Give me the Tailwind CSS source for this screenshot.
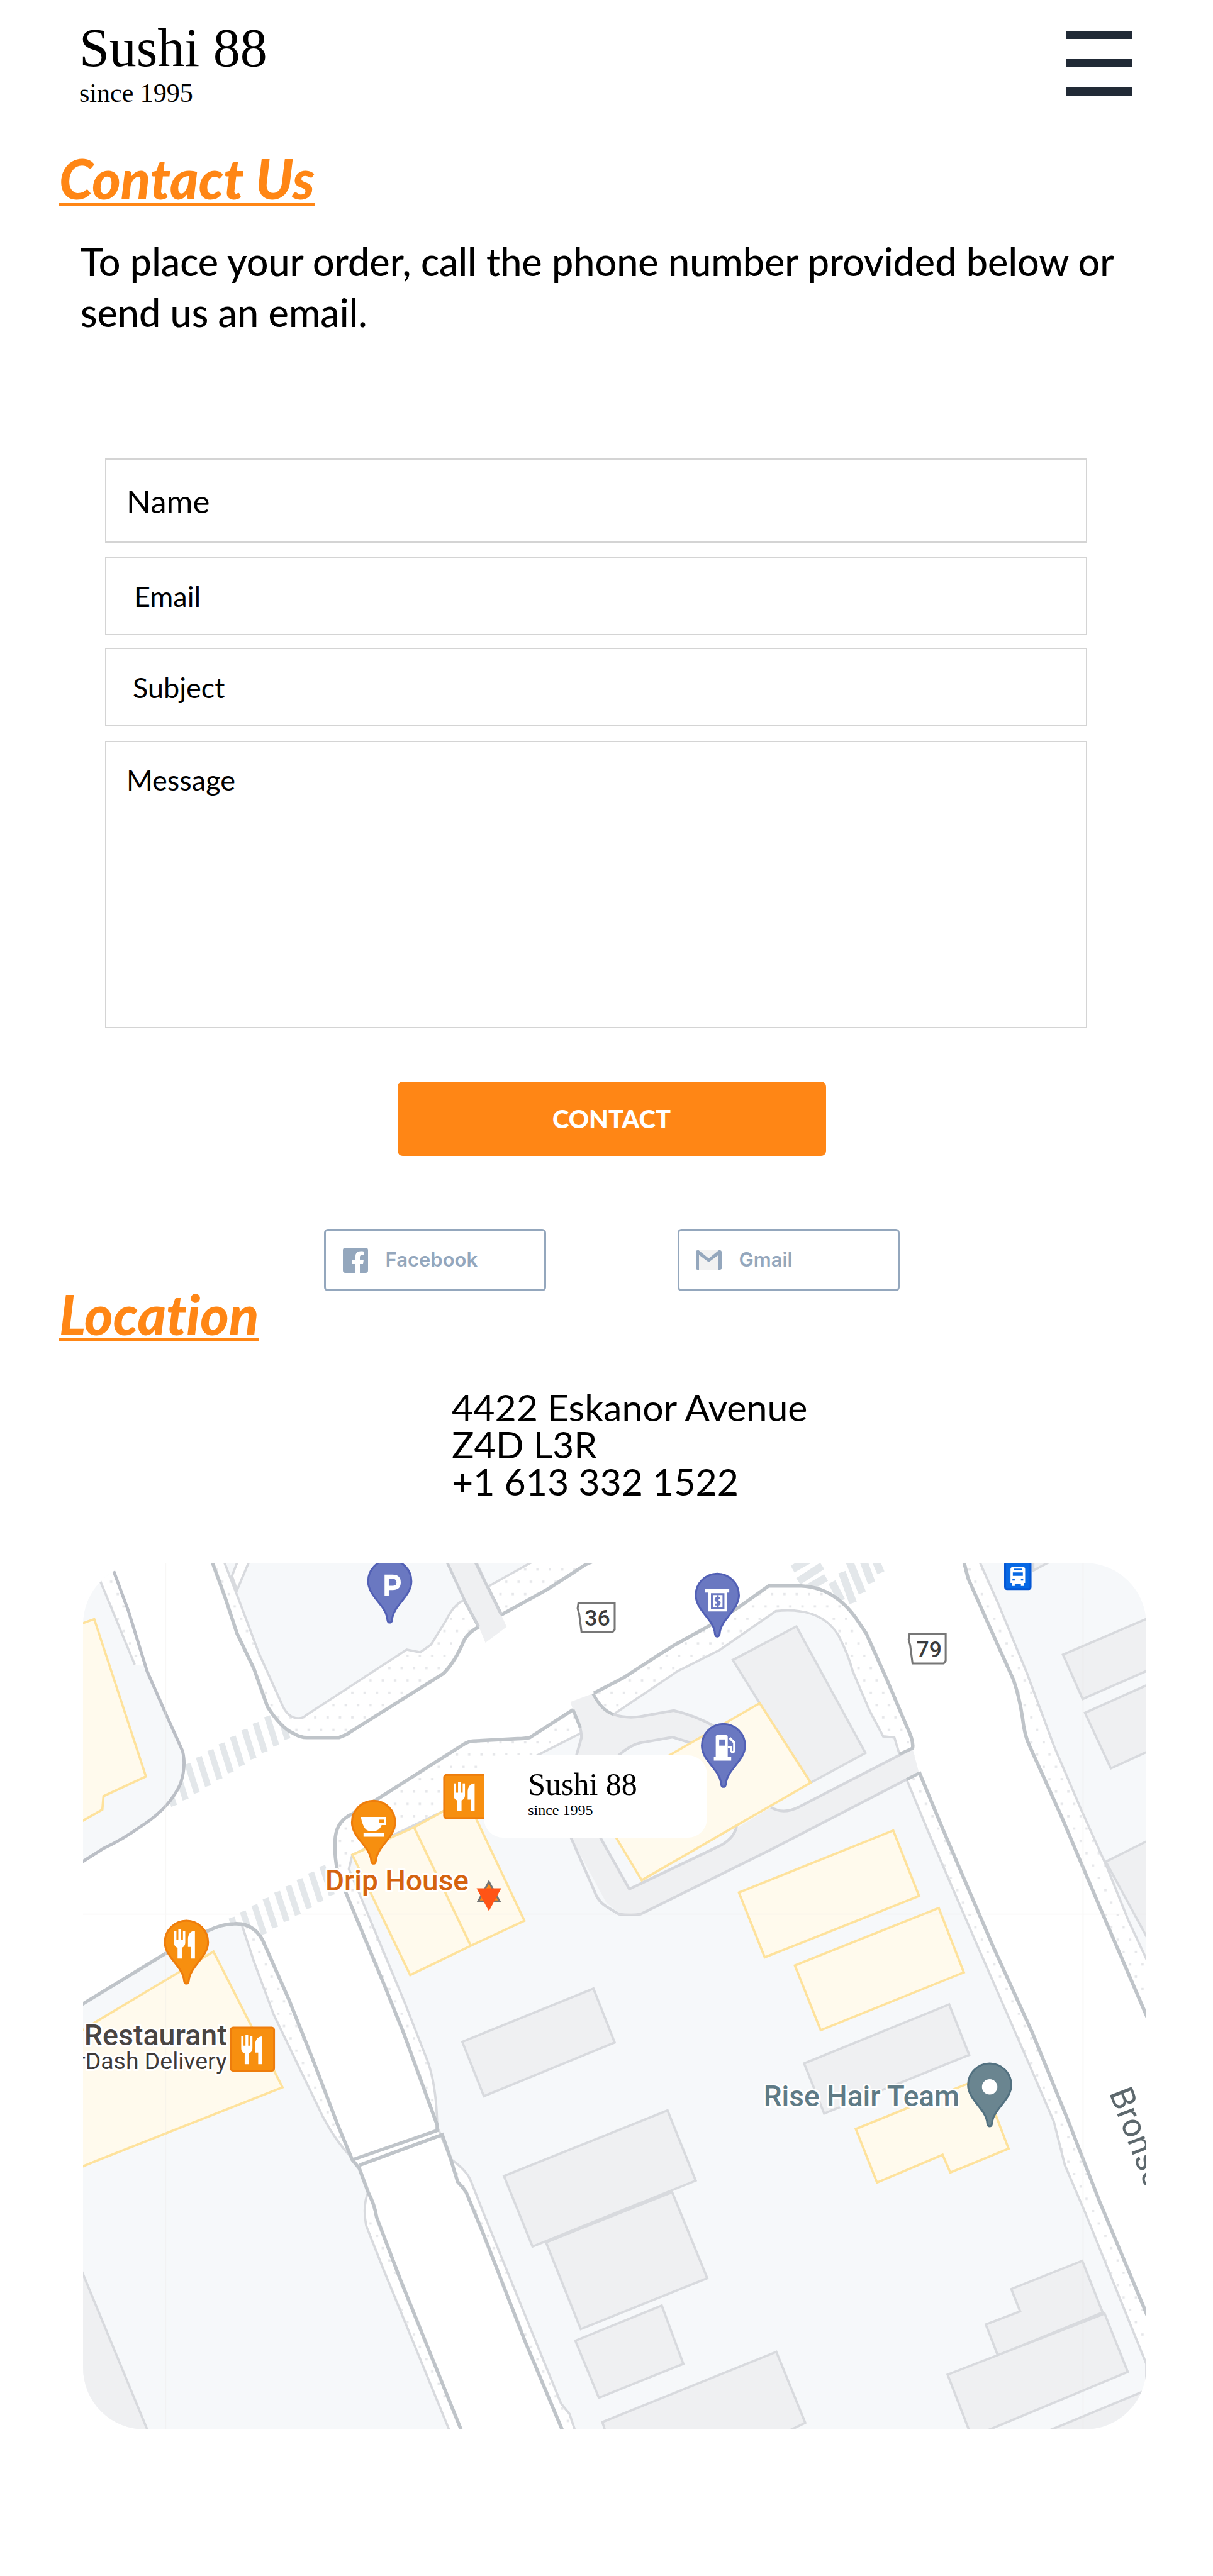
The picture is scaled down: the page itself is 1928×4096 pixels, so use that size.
<!DOCTYPE html>
<html lang="en">
<head>
<meta charset="utf-8">
<meta name="viewport" content="width=device-width, initial-scale=1">
<title>Sushi 88 – Contact Us</title>
<script src="https://cdn.jsdelivr.net/npm/@tailwindcss/browser@4"></script>
</head>
<body class="bg-white text-black font-['Lato','Open_Sans',sans-serif] [font-variant-ligatures:none]">

<header class="flex items-start justify-between pt-[34px] pl-[126px] pr-[129px]">
  <a href="#" class="block font-['Liberation_Serif',serif]">
    <span class="block text-[86px] leading-[84px]">Sushi 88</span>
    <span class="mt-1.5 block text-[42px] leading-12">since 1995</span>
  </a>
  <button type="button" aria-label="Menu" class="mt-[15px] flex w-26 flex-col gap-8">
    <span class="h-[13px] bg-[#212a36]"></span>
    <span class="h-[13px] bg-[#212a36]"></span>
    <span class="h-[13px] bg-[#212a36]"></span>
  </button>
</header>

<main class="pb-[234px]">
  <section>
    <h1 class="mt-[76px] pl-[94px] text-[87px] leading-[72px] font-black italic text-[#ff8615] underline decoration-[5px] underline-offset-[5px]">Contact Us</h1>
    <p class="mt-[55px] pl-32 pr-24 text-[61px] leading-[81px] font-medium">To place your order, call the phone number provided below or send us an email.</p>

    <form class="mt-[192px]">
      <div class="flex flex-col pl-[167px] pr-[200px]">
        <input type="text" name="name" aria-label="Name" placeholder="Name" class="h-[134px] border-2 border-[#d4d4d4] pl-8 text-[51px] placeholder:text-black placeholder:opacity-100">
        <input type="email" name="email" aria-label="Email" placeholder="Email" class="mt-[22px] h-[125px] border-2 border-[#d4d4d4] pl-11 text-[45px] placeholder:text-black placeholder:opacity-100">
        <input type="text" name="subject" aria-label="Subject" placeholder="Subject" class="mt-5 h-[125px] border-2 border-[#d4d4d4] pl-10.5 text-[45px] placeholder:text-black placeholder:opacity-100">
        <textarea name="message" aria-label="Message" placeholder="Message" class="mt-[23px] h-[457px] resize-none border-2 border-[#d4d4d4] pt-[34px] pl-8 text-[45px] leading-[52px] placeholder:text-black placeholder:opacity-100"></textarea>
      </div>
      <div class="mt-[85px] flex justify-center pl-4">
        <button type="submit" class="h-[118px] w-[681px] rounded-lg bg-[#ff8615] text-[40px] font-black text-white">CONTACT</button>
      </div>
    </form>

    <div class="mt-[116px] flex justify-center gap-[209px] pl-4 font-['Inter',sans-serif] text-[31px] font-semibold text-[#94a7bd]">
      <a href="#" class="flex h-[99px] w-[353px] items-center gap-[28px] rounded-md border-3 border-[#94a7bd] pl-[27px]">
        <svg class="size-10" viewBox="0 0 40 40" aria-hidden="true"><path fill="#94a7bd" d="M4 0H36a4 4 0 0 1 4 4V36a4 4 0 0 1-4 4H27V26h5l1-7h-6v-4c0-2 1-3.500 3.500-3.500H33V6c-1-.3-2.500-.5-4.500-.5-5.500 0-8.500 3-8.500 8.500v5h-5v7h5v14H4a4 4 0 0 1-4-4V4a4 4 0 0 1 4-4z"/></svg>
        <span>Facebook</span>
      </a>
      <a href="#" class="flex h-[99px] w-[353px] items-center gap-[28px] rounded-md border-3 border-[#94a7bd] pl-[26px]">
        <svg class="h-[31px] w-[41px]" viewBox="0 0 41 31" aria-hidden="true"><path fill="#f2f2f2" d="M2 0H39V31H2z"/><path fill="#94a7bd" d="M0 3a3 3 0 0 1 3-3h1.500L20.500 13 36.500 0H38a3 3 0 0 1 3 3V28a3 3 0 0 1-3 3h-2V7.500L20.500 19 5 7.500V31H3a3 3 0 0 1-3-3z"/></svg>
        <span>Gmail</span>
      </a>
    </div>
  </section>

  <section>
    <h2 class="pl-[94px] text-[87px] leading-[74px] font-black italic text-[#ff8615] underline decoration-[5px] underline-offset-[5px]">Location</h2>
    <address class="mt-[81px] pl-[718px] text-[59px] leading-[59px] not-italic">4422 Eskanor Avenue<br>Z4D L3R<br>+1 613 332 1522</address>

    <div class="relative mt-[100px] mr-[106px] ml-[132px] aspect-[2756/2248] overflow-hidden rounded-[98px]">
      <svg class="block size-full" viewBox="216 4052 2756 2248" role="img" aria-label="Map" fill="none">
        <defs>
          <pattern id="walk" x="818" y="4474" width="32" height="64" patternUnits="userSpaceOnUse">
            <rect width="32" height="64" fill="#fff"/>
            <rect x="12" y="8" width="6" height="6" fill="#e6e7ea"/>
            <rect x="-3" y="40" width="6" height="6" fill="#e6e7ea"/>
            <rect x="29" y="40" width="6" height="6" fill="#e6e7ea"/>
          </pattern>
          <path id="pin" d="M0 0C-5 0-6-4-7-14C-13-46-56-70-56-107A56 56 0 0 1 56-107C56-70 13-46 7-14C6-4 5 0 0 0Z"/>
          <g id="cutlery" fill="#fff"><path d="M-32-36h6v24h5v-28h7v28h5v-24h6v30c0 8-4 12-9 14V36h-11V8c-6-2-9-6-9-14z"/><path d="M22-36V36H12V6H4V-14C4-28 12-36 22-36z"/></g>
        </defs>
        <rect x="216" y="4052" width="2756" height="2248" fill="#fff"/>

        <!-- crosswalks -->
        <g stroke="#e3e7ea" stroke-width="16">
          <path d="M722 4433l24 76M693 4450l24 76M663 4467l24 76M634 4484l24 76M604 4502l24 76M575 4520l24 76M546 4537l24 76M516 4555l24 76M487 4573l24 76M458 4590l24 76M435 4632l17 50"/>
          <path d="M836 4838l25 76M807 4855l25 76M777 4872l25 76M748 4889l25 76M719 4905l25 76M689 4922l25 76M660 4939l25 76M630 4956l25 76M601 4972l25 76"/>
          <path stroke-width="20" d="M2055 4068L2098 4044M2070 4100L2132 4060M2090 4120L2142 4090"/>
          <path stroke-width="20" d="M2157 4102L2182 4150M2183 4076L2212 4156M2203 4050L2236 4130M2240 4050L2260 4104M2272 4050L2284 4078"/>
        </g>

        <!-- north-west block -->
        <path fill="#f6f8fa" d="M216 4052H286L296 4075L334 4178L382 4333L430 4442L474 4540Q484 4580 468 4626Q455 4655 430 4683Q400 4715 359 4740Q320 4768 270 4792L216 4827Z"/>
        <path fill="url(#walk)" d="M241 4052H286L296 4075L334 4178L378 4320L350 4316L261 4100Z"/>
        <path stroke="#d8dade" stroke-width="6" d="M241 4052L261 4100L350 4316"/>
        <path stroke="#bbbfc6" stroke-width="8" d="M286 4052L296 4075L334 4178L382 4333L430 4442L474 4540Q484 4580 468 4626Q455 4655 430 4683Q400 4715 359 4740Q320 4768 270 4792L210 4830"/>

        <!-- parking block -->
        <path fill="url(#walk)" stroke="#bfc4c9" stroke-width="9" d="M549 4045L583 4138L615 4235L659 4327L694 4425Q729 4480 761 4494Q780 4505 796 4505H879Q900 4498 908 4491L1150 4339Q1180 4310 1205 4250Q1218 4230 1242 4218L1205 4149L1159 4045Z"/>
        <path fill="#f6f8fa" stroke="#d8dade" stroke-width="6" d="M580 4045L618 4143L672 4287L729 4413Q745 4455 774 4455Q785 4455 793 4448L1055 4277L1090 4284L1118 4264L1157 4201Q1180 4155 1205 4149L1159 4045Z"/>
        <path fill="#fff" stroke="#d8dade" stroke-width="6" d="M648 4045L615 4123L602 4086L618 4045"/>
        <path fill="url(#walk)" stroke="#bfc4c9" stroke-width="9" d="M1233 4045L1263 4112L1300 4187L1419 4121L1483 4080L1518 4057L1545 4045"/>
        <path fill="#f6f8fa" stroke="#d8dade" stroke-width="6" d="M1233 4045L1265 4114L1385 4047"/>
        <path fill="#eff0f2" d="M1159 4045L1205 4149L1242 4218L1259 4259L1314 4218L1300 4187L1263 4112L1233 4045Z"/>
        <path stroke="#cdd0d5" stroke-width="7" d="M1157 4045L1205 4149L1242 4218M1230 4045L1263 4112L1300 4187"/>

        <!-- east block -->
        <path fill="url(#walk)" d="M2501 4045L2510 4092L2561 4207L2628 4356L2651 4453L2670 4528L2753 4712L2855 4953L2972 5225V4045Z"/>
        <path fill="#f6f8fa" stroke="#d8dade" stroke-width="6" d="M2538 4045L2587 4155L2663 4339L2733 4528L2804 4694L2870 4841L2925 4978L2976 5088V4045Z"/>
        <path stroke="#bfc4c9" stroke-width="9" d="M2498 4045L2510 4092L2561 4207L2628 4356Q2643 4400 2651 4453Q2656 4500 2670 4528L2753 4712L2855 4953L2975 5232"/>

        <!-- south-west block -->
        <path fill="#f6f8fa" d="M216 5195L430 5065L538 5007Q576 4988 608 4988Q640 4988 629 4996L659 5086L710 5223L774 5356L838 5489L914 5600L928 5614L955 5684L944 5717L950 5771L995 5885L1164 6300H216Z"/>
        <path fill="url(#walk)" d="M629 4990Q672 4994 688 5045L749 5183L812 5341L876 5509L914 5596L838 5489L774 5356L710 5223L659 5086ZM955 5684L970 5717L977 5749L1039 5912L1196 6300H1164L995 5885L950 5771L944 5717Z"/>
        <path stroke="#d8dade" stroke-width="6" d="M628 4992L659 5086L710 5223L774 5356L838 5489Q870 5550 908 5590M955 5684Q940 5720 950 5771L995 5885L1167 6305"/>
        <path stroke="#bfc4c9" stroke-width="9" d="M210 5199L430 5065L538 5007Q576 4988 608 4988Q665 4985 688 5045L749 5183L812 5341L876 5509L914 5600L932 5622L955 5684Q972 5717 977 5749L1039 5912L1198 6305"/>

        <!-- central block -->
        <path fill="url(#walk)" d="M868 4804L870 4763Q880 4720 914 4703L972 4669L1205 4521L1228 4514L1374 4505L1486 4433L1540 4390L1617 4350L1751 4264L1840 4215L1917 4166L1993 4112H2077Q2166 4120 2217 4192L2246 4235L2351 4476L2366 4533L2383 4594L2510 4895L2676 5269L2770 5500L2850 5706L2972 5999V6300H1457L1254 5793L1187 5657L1147 5535L1048 5274L895 4902Z"/>
        <path fill="#f6f8fa" stroke="#d8dade" stroke-width="6" d="M905 4846L914 4809L1148 4697L1393 4551L1505 4494L1591 4445L1757 4333L1866 4278L2012 4177Q2128 4165 2174 4240Q2200 4290 2211 4333L2255 4436L2290 4502L2319 4505L2332 4548L2351 4614L2408 4752L2523 5019L2670 5356L2732 5500L2761 5614L2814 5738L2972 6129V6310H1494L1477 6259L1455 6232L1254 5738L1222 5657Q1212 5628 1169 5598L1134 5514Q1132 5400 1106 5336L1048 5188L933 4912Z"/>
        <path stroke="#bfc4c9" stroke-width="9" d="M875 4850Q866 4800 870 4763Q875 4720 914 4703L972 4669L1205 4521Q1215 4515 1228 4514L1342 4508Q1362 4508 1374 4505L1486 4433M1540 4390L1617 4350L1700 4296L1751 4264L1840 4215L1917 4166L1993 4112H2077Q2160 4115 2217 4192L2246 4235L2300 4356L2351 4476Q2370 4515 2366 4533M2383 4594L2446 4746L2574 5045L2676 5269L2770 5500L2850 5706L2975 6005M895 4902L997 5147L1048 5274L1134 5510V5524L914 5600M932 5614L1147 5535L1169 5598L1187 5657Q1200 5670 1209 5684L1254 5793L1361 6069L1460 6305"/>

        <!-- service lanes -->
        <path fill="#eff0f2" d="M1479 4413L1537 4391L1566 4428L1591 4445Q1629 4458 1674 4448L1747 4435Q1800 4447 1853 4476L1792 4519L1744 4504L1655 4519L1604 4551L1520 4600L1556 4763L1636 4898L1872 4783Q1905 4763 1910 4740L1999 4686Q2038 4705 2070 4686L2366 4533L2383 4597L2000 4795L1661 4963H1610L1572 4933L1480 4763L1495 4551L1508 4505Q1508 4476 1486 4433Z"/>
        <path stroke="#d5d7dc" stroke-width="7" d="M1486 4433Q1508 4476 1508 4505L1495 4551L1480 4763L1540 4900Q1550 4930 1572 4943L1605 4963Q1635 4967 1661 4963L2000 4795L2383 4597M1556 4763L1632 4898L1872 4783Q1905 4763 1910 4735M1999 4686Q2030 4705 2070 4686L2366 4533M1591 4445Q1629 4458 1674 4448L1747 4435Q1800 4447 1853 4476M1604 4551Q1640 4519 1675 4516L1744 4504L1792 4519"/>
        <path stroke="#bfc4c9" stroke-width="8" d="M1486 4433L1505 4480M1538 4391Q1560 4435 1591 4445M2332 4548L2368 4532M2351 4614L2384 4597"/>

        <!-- buildings -->
        <g fill="#eff0f2" stroke="#d8dade" stroke-width="6">
          <path d="M2065 4217L1900 4304L1970 4416L2102 4622L2244 4545Z"/>
          <path d="M2085 5350L2461 5197L2513 5328L2137 5480Z"/>
          <path d="M1199 5294L1539 5156L1594 5296L1255 5435Z"/>
          <path d="M1307 5642L1731 5472L1804 5654L1381 5825Z"/>
          <path d="M1416 5814L1743 5684L1834 5907L1506 6039Z"/>
          <path d="M1492 6069L1716 5978L1772 6129L1553 6217Z"/>
          <path d="M1562 6280L2013 6098L2088 6282L2030 6310H1572Z"/>
          <path d="M2806 5862L2859 5996L2587 6107L2556 6027L2645 5993L2622 5935Z"/>
          <path d="M2864 5999L2924 6150L2540 6310H2516L2457 6157Z"/>
          <path d="M2710 6306L2985 6192V6310Z"/>
          <path d="M2756 4290L2985 4192V4327L2807 4405Z"/>
          <path d="M2813 4441L2985 4364V4537L2880 4585Z"/>
          <path d="M2867 4827L2985 4768V5044Z"/>
          <path d="M2679 4072L2730 4045H2679Z"/>
          <path d="M205 5870L386 6308H205Z"/>
        </g>
        <g fill="#fffaed" stroke="#fee29c" stroke-width="6">
          <path d="M206 4212L245 4198L379 4606L269 4657L266 4692L206 4726Z"/>
          <path d="M1970 4416L2102 4622L1664 4875L1538 4665Z"/>
          <path d="M914 4809L1074 4738L1210 4663L1360 4980L1221 5045L1064 5121Z"/>
          <path d="M1074 4738L1221 5045"/>
          <path d="M206 5270L251 5241L554 5060L733 5412L257 5600L206 5621Z"/>
          <path d="M1916 4907L2316 4746L2383 4916L1983 5075Z"/>
          <path d="M2061 5096L2434 4947L2499 5114L2128 5264Z"/>
          <path d="M2219 5520L2545 5388L2615 5571L2464 5633L2444 5587L2274 5659Z"/>
        </g>
        <path stroke="#ebe8e4" stroke-width="3" opacity=".35" d="M430 4052V6300M2808 4052V6300M216 4963H2972"/>

        <!-- route shields -->
        <g fill="#fff" stroke="#777" stroke-width="5">
          <path d="M1500 4156H1594V4225L1589 4231H1508L1502 4185L1498 4170Z"/>
          <path d="M2358 4237H2452V4306L2447 4313H2366L2360 4266L2356 4251Z"/>
        </g>
        <g fill="#3c3c3c" font-family="Roboto, sans-serif" font-weight="500" font-size="58" text-anchor="middle">
          <text x="1549" y="4215">36</text>
          <text x="2409" y="4296">79</text>
        </g>

        <!-- place names -->
        <g font-family="Roboto, sans-serif" font-size="76" stroke="#fff" stroke-width="10" stroke-linejoin="round" paint-order="stroke">
          <text x="844" y="4902" fill="#d5630f" font-size="75" font-weight="500">Drip House</text>
          <text x="589" y="5303" fill="#4a4543" font-weight="500" text-anchor="end">Restaurant</text>
          <text x="589" y="5364" fill="#3f3a38" font-size="61" text-anchor="end">rDash Delivery</text>
          <text x="2488" y="5461" fill="#5f7b86" font-size="75" font-weight="500" text-anchor="end">Rise Hair Team</text>
          <text transform="translate(2875 5426) rotate(69)" fill="#5d686d" font-size="86">Bronson</text>
        </g>

        <!-- markers -->
        <g fill="#6a78c1" stroke="#5260b5" stroke-width="5">
          <use href="#pin" x="1011" y="4207"/>
          <use href="#pin" x="1860" y="4243"/>
          <use href="#pin" x="1876" y="4633"/>
        </g>
        <path stroke="#fff" stroke-width="11" d="M1003 4138V4088H1018Q1034 4088 1034 4103Q1034 4117 1018 4117H1003"/>
        <path fill="#fff" d="M1828 4119H1891V4129H1885V4178H1837V4129H1828Z"/>
        <path stroke="#6a78c1" stroke-width="5" d="M1846 4133H1876V4170H1846ZM1861 4136V4167M1868 4143H1858Q1852 4150 1860 4151Q1870 4153 1864 4160H1854"/>
        <path fill="#fff" d="M1856 4502Q1856 4499 1860 4499H1883Q1887 4499 1887 4503V4555H1896V4565H1851V4555H1856Z"/>
        <path fill="#6a78c1" d="M1865 4510H1881V4526H1865Z"/>
        <path stroke="#fff" stroke-width="6" d="M1892 4506L1904 4518V4540Q1900 4546 1896 4540V4530H1887"/>
        <g fill="#f78f0f" stroke="#ee7d0c" stroke-width="5">
          <use href="#pin" x="969" y="4832"/>
          <use href="#pin" x="484" y="5143"/>
          <rect x="1152" y="4602" width="112" height="112" rx="6"/>
          <rect x="599" y="5257" width="112" height="112" rx="6"/>
        </g>
        <path fill="#fff" d="M936 4711H1002V4732H990Q984 4747 972 4747H958Q943 4747 936 4711ZM943 4752H996V4762H943Z"/>
        <path fill="#f78f0f" d="M984 4718H996V4726H984Z"/>
        <use href="#cutlery" x="484" y="5042"/>
        <use href="#cutlery" x="1209" y="4660"/>
        <use href="#cutlery" x="658" y="5316"/>
        <use href="#pin" x="2566" y="5513" fill="#6a8590" stroke="#527180" stroke-width="5"/>
        <circle cx="2566" cy="5411" r="20" fill="#fff"/>
        <rect x="2606" y="4050" width="66" height="70" rx="5" fill="#0768e4" stroke="#0557d4" stroke-width="5"/>
        <path fill="#fff" d="M2620 4068Q2620 4063 2626 4063H2652Q2658 4063 2658 4068V4104H2655V4112H2647V4106H2631V4112H2623V4104H2620Z"/>
        <path fill="#0768e4" d="M2626 4077H2652V4086H2626ZM2625 4093H2631V4098H2625ZM2647 4093H2653V4098H2647ZM2628 4067H2650V4071H2628Z"/>
        <path fill="#ff8615" stroke="#747474" stroke-width="5" d="M1268 4879L1296 4930H1240Z"/>
        <path fill="#ff5416" d="M1236 4896H1300L1268 4955Z"/>
      </svg>
      <a href="#" class="absolute top-[22.200%] left-[37.700%] flex h-[9.500%] w-[21%] flex-col rounded-[31px] bg-white pt-[21px] pl-[70px] font-['Liberation_Serif',serif]">
        <span class="text-[50px] leading-[50px]">Sushi 88</span>
        <span class="text-[24px] leading-8">since 1995</span>
      </a>
    </div>
  </section>
</main>
</body>
</html>
